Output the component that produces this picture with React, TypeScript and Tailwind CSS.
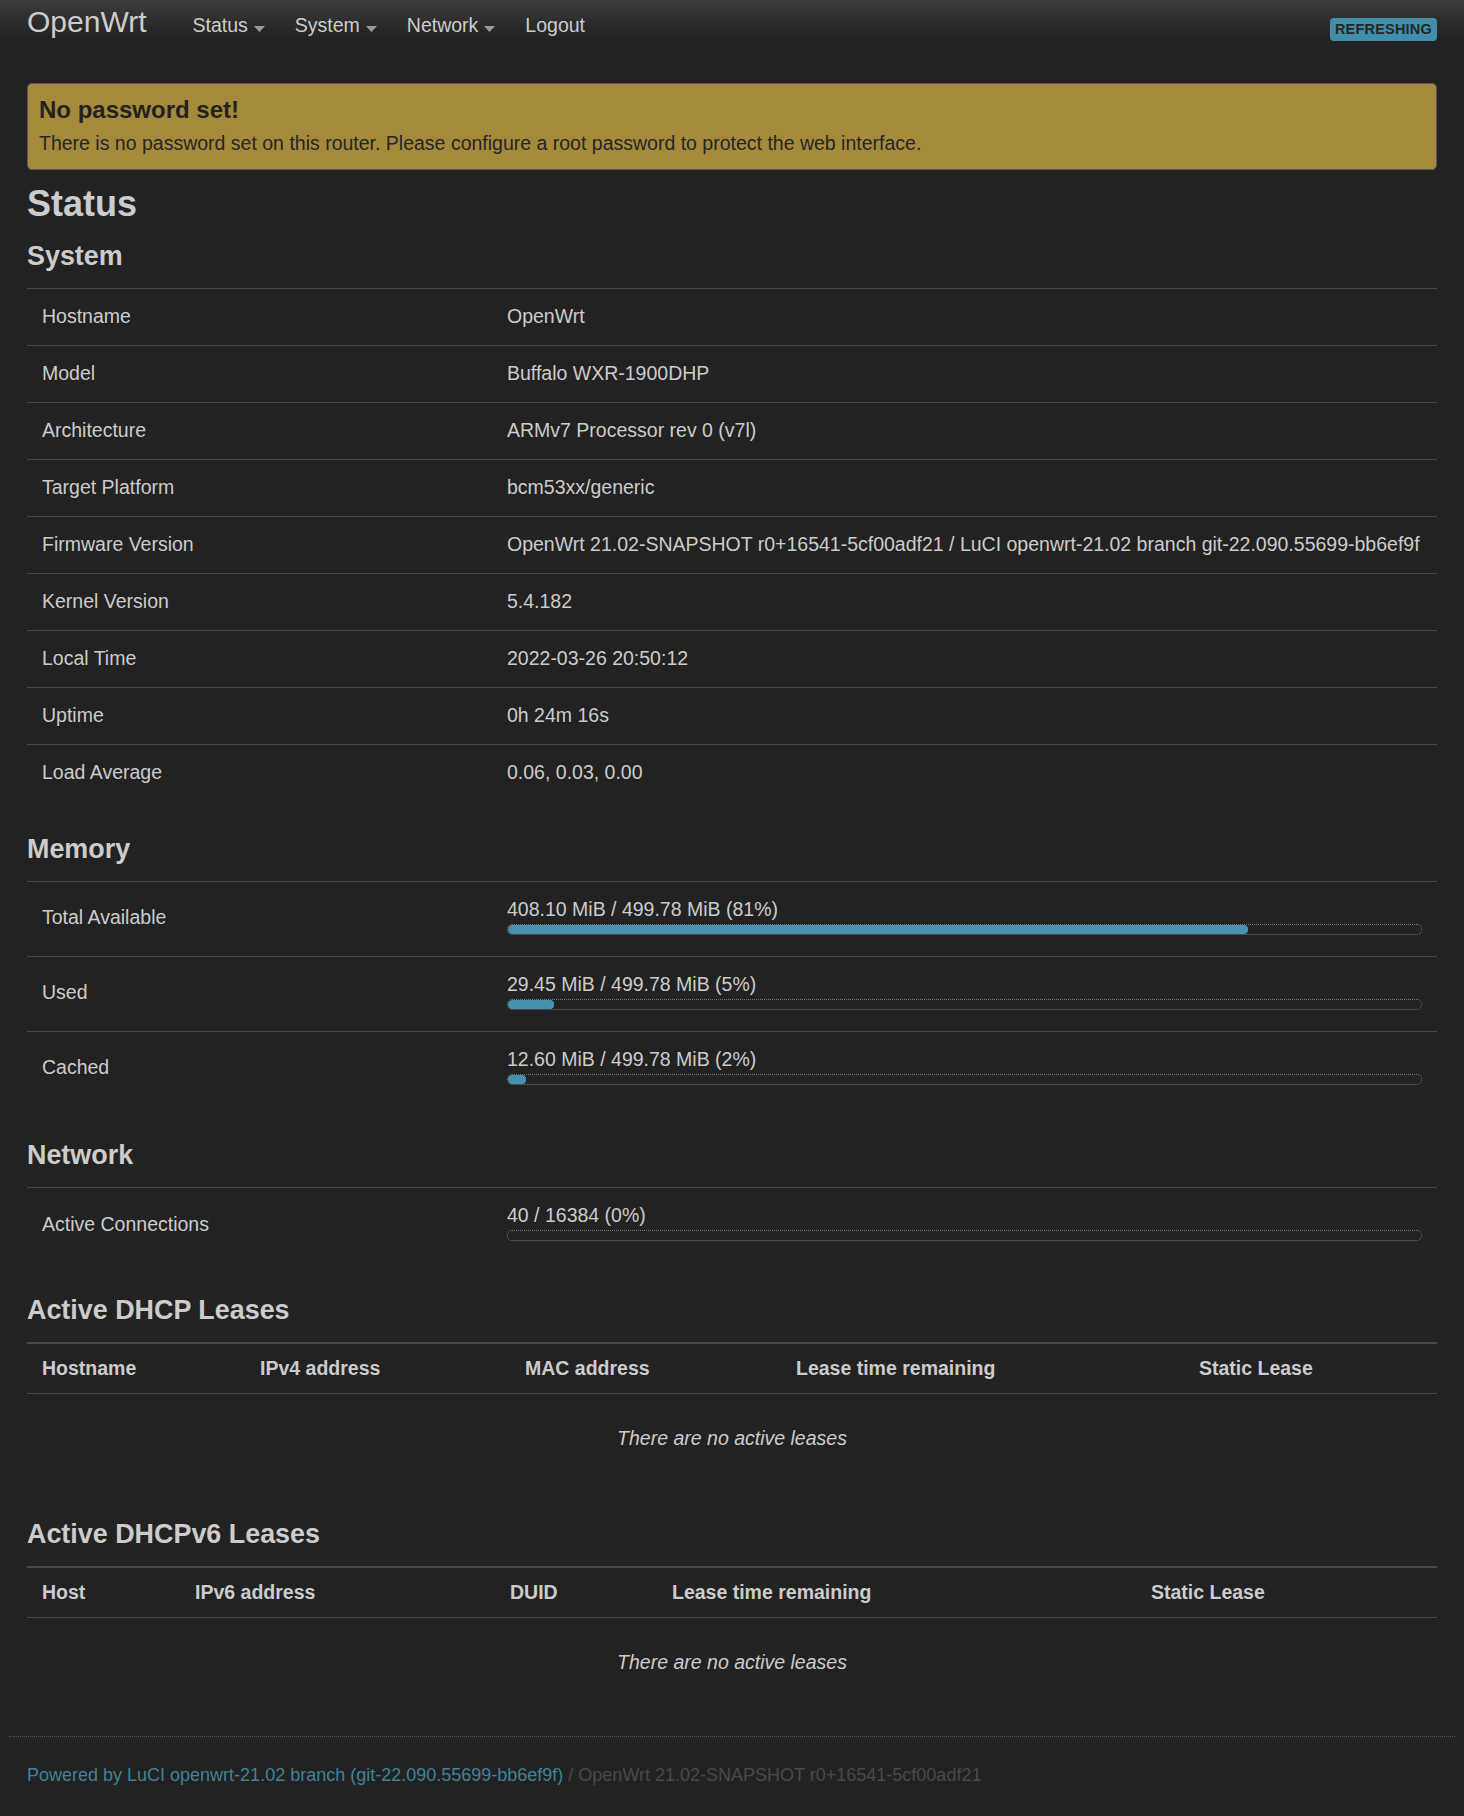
import React from "react";

const systemRows: [string, string][] = [
  ["Hostname", "OpenWrt"],
  ["Model", "Buffalo WXR-1900DHP"],
  ["Architecture", "ARMv7 Processor rev 0 (v7l)"],
  ["Target Platform", "bcm53xx/generic"],
  [
    "Firmware Version",
    "OpenWrt 21.02-SNAPSHOT r0+16541-5cf00adf21 / LuCI openwrt-21.02 branch git-22.090.55699-bb6ef9f",
  ],
  ["Kernel Version", "5.4.182"],
  ["Local Time", "2022-03-26 20:50:12"],
  ["Uptime", "0h 24m 16s"],
  ["Load Average", "0.06, 0.03, 0.00"],
];

const memoryRows = [
  { label: "Total Available", text: "408.10 MiB / 499.78 MiB (81%)", pct: 81 },
  { label: "Used", text: "29.45 MiB / 499.78 MiB (5%)", pct: 5 },
  { label: "Cached", text: "12.60 MiB / 499.78 MiB (2%)", pct: 2 },
];

function Caret() {
  return (
    <svg width="11" height="6" viewBox="0 0 11 6" className="ml-[6px] self-center mt-[7px]">
      <path d="M0 0 L11 0 L5.5 6 Z" fill="#9a9a9a" />
    </svg>
  );
}

function Header() {
  return (
    <header className="h-[50px] bg-[linear-gradient(to_bottom,#3c3c3c,#2a2a2a_26px,#222_38px)] px-[27px] flex items-start justify-between">
      <div className="flex items-baseline pt-[4px]">
        <span className="text-[30px] leading-[36px] text-[#cccccc]">OpenWrt</span>
        <nav className="ml-[46px] flex items-baseline gap-[30px] text-[19.5px] text-[#cccccc]">
          {["Status", "System", "Network"].map((item) => (
            <span key={item} className="flex">
              {item}
              <Caret />
            </span>
          ))}
          <span>Logout</span>
        </nav>
      </div>
      <span className="mt-[18px] h-[23px] px-[5px] rounded-[4px] bg-[#3f8fab] text-[#262626] text-[14.5px] font-bold leading-[23px] tracking-[0.2px]">
        REFRESHING
      </span>
    </header>
  );
}

function SectionTitle({ children }: { children: React.ReactNode }) {
  return <h3 className="text-[26.9px] font-bold leading-[32px] text-[#cccccc] mb-[16px]">{children}</h3>;
}

function Progress({ text, pct }: { text: string; pct: number }) {
  return (
    <div className="pb-[8px]">
      <div className="leading-[28px]">{text}</div>
      <div className="mt-[1px] h-[11px] rounded-[5px] border border-dotted border-[#767676] overflow-hidden">
        <div className="h-full bg-[#4592ae] rounded-[4px]" style={{ width: `${pct}%` }} />
      </div>
    </div>
  );
}

function LeaseTable({ cols, grid }: { cols: string[]; grid: string }) {
  return (
    <div>
      <div className={`grid ${grid} h-[52px] items-center border-t-2 border-b border-[#484848] font-bold`}>
        {cols.map((c) => (
          <div key={c} className="px-[15px]">
            {c}
          </div>
        ))}
      </div>
      <div className="h-[90px] flex items-center justify-center italic">There are no active leases</div>
    </div>
  );
}

export default function App() {
  return (
    <div className="min-h-screen bg-[#222222] font-['Liberation_Sans',Arial,sans-serif] text-[#cccccc] text-[19.5px]">
      <Header />
      <main className="px-[27px]">
        <div className="mt-[33px] rounded-[5px] border border-[#5a5a5a] bg-[#a58a3b] px-[11px] pt-[11px] pb-[12px] text-[#222222]">
          <h4 className="text-[24px] font-bold leading-[30px]">No password set!</h4>
          <p className="mt-[4px] leading-[28px] text-[#262626]">
            There is no password set on this router. Please configure a root password to protect the web interface.
          </p>
        </div>

        <h2 className="mt-[14px] text-[36px] font-bold leading-[40px] text-[#cccccc]">Status</h2>

        <section className="mt-[16px]">
          <SectionTitle>System</SectionTitle>
          {systemRows.map(([k, v]) => (
            <div key={k} className="flex h-[57px] items-center border-t border-[#484848]">
              <div className="w-[465px] shrink-0 px-[15px] pb-[1px]">{k}</div>
              <div className="px-[15px] pb-[1px] whitespace-nowrap">{v}</div>
            </div>
          ))}
        </section>

        <section className="mt-[32px]">
          <SectionTitle>Memory</SectionTitle>
          {memoryRows.map((r) => (
            <div key={r.label} className="flex h-[75px] items-center border-t border-[#484848]">
              <div className="w-[465px] shrink-0 px-[15px] pb-[2px]">{r.label}</div>
              <div className="flex-1 px-[15px]">
                <Progress text={r.text} pct={r.pct} />
              </div>
            </div>
          ))}
        </section>

        <section className="mt-[33px]">
          <SectionTitle>Network</SectionTitle>
          <div className="flex h-[75px] items-center border-t border-[#484848]">
            <div className="w-[465px] shrink-0 px-[15px]">Active Connections</div>
            <div className="flex-1 px-[15px]">
              <Progress text="40 / 16384 (0%)" pct={0} />
            </div>
          </div>
        </section>

        <section className="mt-[32px]">
          <SectionTitle>Active DHCP Leases</SectionTitle>
          <LeaseTable
            cols={["Hostname", "IPv4 address", "MAC address", "Lease time remaining", "Static Lease"]}
            grid="grid-cols-[218px_265px_271px_403px_1fr]"
          />
        </section>

        <section className="mt-[34px]">
          <SectionTitle>Active DHCPv6 Leases</SectionTitle>
          <LeaseTable
            cols={["Host", "IPv6 address", "DUID", "Lease time remaining", "Static Lease"]}
            grid="grid-cols-[153px_315px_162px_479px_1fr]"
          />
        </section>
      </main>

      <footer className="mx-[9px] mt-[28px] border-t border-dotted border-[#555555] px-[18px] pt-[26px] pb-[29px] text-[18px] leading-[24px]">
        <span className="text-[#3f8398]">Powered by LuCI openwrt-21.02 branch (git-22.090.55699-bb6ef9f)</span>
        <span className="text-[#4a4a4a]"> / OpenWrt 21.02-SNAPSHOT r0+16541-5cf00adf21</span>
      </footer>
    </div>
  );
}
